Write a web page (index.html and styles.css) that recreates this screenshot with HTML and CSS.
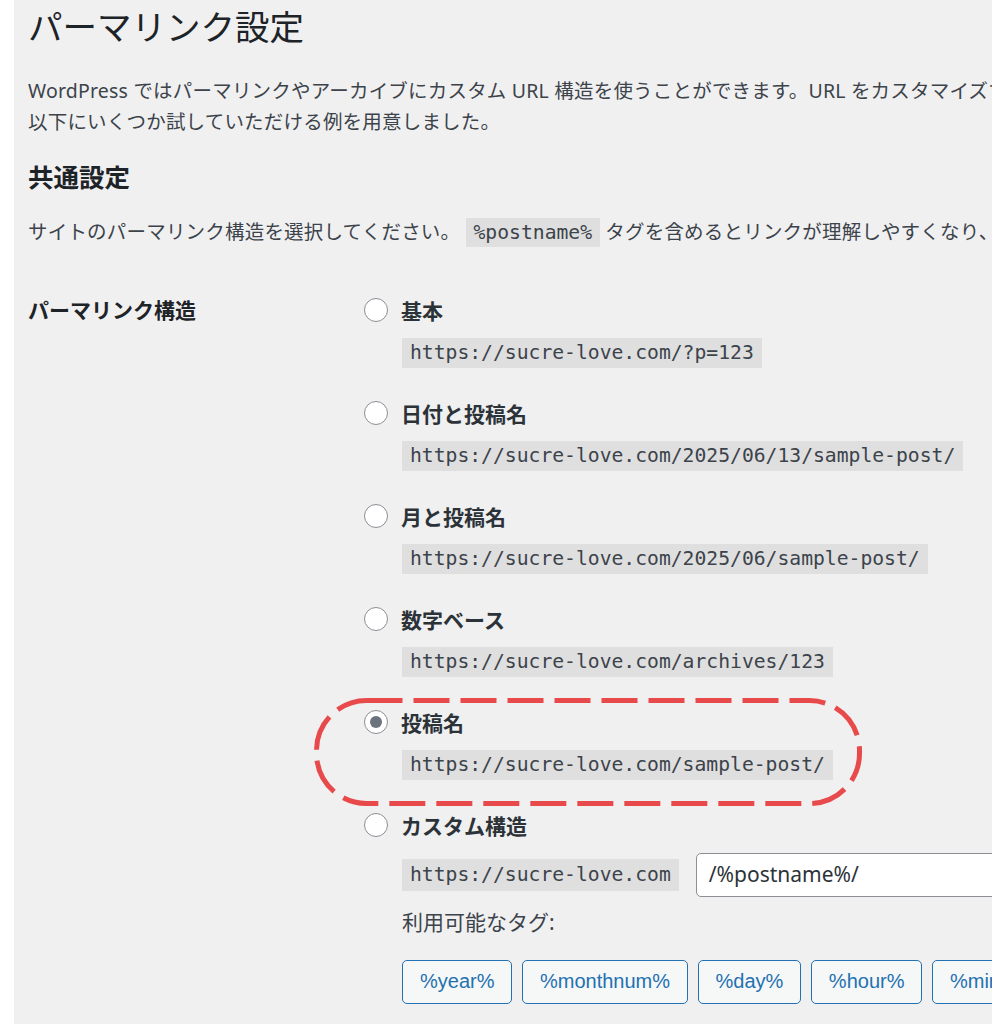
FILE: index.html
```html
<!DOCTYPE html>
<html lang="ja">
<head>
  <meta charset="UTF-8" />
  <title>パーマリンク設定</title>
  <link rel="stylesheet" href="styles.css">
</head>
<body>
  <div class="panel">
    <h1 class="title">パーマリンク設定</h1>

    <p class="intro">
      <span class="line">WordPress ではパーマリンクやアーカイブにカスタム URL 構造を使うことができます。URL をカスタマイズすることで、リンクの美しさや使いやすさ、そして前方互換性を改善できます。</span>
      <span class="line">以下にいくつか試していただける例を用意しました。</span>
    </p>

    <h2 class="section">共通設定</h2>

    <p class="desc">サイトのパーマリンク構造を選択してください。 <code>%postname%</code> タグを含めるとリンクが理解しやすくなり、投稿が検索エンジンで上位に表示されやすくなります。</p>

    <div class="form-row">
      <div class="th">パーマリンク構造</div>
      <div class="td">
        <div class="opt">
          <label class="opt-label"><span class="radio"></span>基本</label>
          <code class="sample">https://sucre-love.com/?p=123</code>
        </div>
        <div class="opt">
          <label class="opt-label"><span class="radio"></span>日付と投稿名</label>
          <code class="sample">https://sucre-love.com/2025/06/13/sample-post/</code>
        </div>
        <div class="opt">
          <label class="opt-label"><span class="radio"></span>月と投稿名</label>
          <code class="sample">https://sucre-love.com/2025/06/sample-post/</code>
        </div>
        <div class="opt">
          <label class="opt-label"><span class="radio"></span>数字ベース</label>
          <code class="sample">https://sucre-love.com/archives/123</code>
        </div>
        <div class="opt">
          <label class="opt-label"><span class="radio checked"></span>投稿名</label>
          <code class="sample">https://sucre-love.com/sample-post/</code>
        </div>
        <div class="opt custom">
          <label class="opt-label"><span class="radio"></span>カスタム構造</label>
          <div class="custom-row">
            <code class="sample">https://sucre-love.com</code>
            <div class="custom-input">/%postname%/</div>
          </div>
          <div class="tags-label">利用可能なタグ:</div>
          <div class="tags">
            <button class="tag">%year%</button>
            <button class="tag">%monthnum%</button>
            <button class="tag">%day%</button>
            <button class="tag">%hour%</button>
            <button class="tag">%minute%</button>
            <button class="tag">%second%</button>
          </div>
        </div>
      </div>
    </div>

    <svg class="highlight" width="548" height="108" viewBox="0 0 548 108">
      <rect x="2.5" y="2.5" width="543" height="103" rx="50" ry="50"
            fill="none" stroke="#e8494a" stroke-width="5" stroke-dasharray="36 11" />
    </svg>
  </div>
</body>
</html>
```

FILE: styles.css
```css
body {
  margin: 0;
  background: #fff;
  font-family: "Noto Sans", "Noto Sans CJK JP", sans-serif;
  color: #3c434a;
}

.panel {
  position: relative;
  margin-left: 14px;
  width: 978px;
  height: 1024px;
  padding-left: 14px;
  box-sizing: border-box;
  background: #f0f0f1;
  overflow: hidden;
}

.title {
  margin: 0;
  padding-top: 5px;
  font-size: 34.5px;
  line-height: 44px;
  font-weight: 400;
  color: #1d2327;
  white-space: nowrap;
}

.intro {
  margin: 26px 0 0;
  font-size: 19.5px;
  line-height: 31px;
  letter-spacing: 0.2px;
}

.intro .line {
  display: block;
  white-space: nowrap;
}

.section {
  margin: 22.5px 0 0;
  font-size: 25.5px;
  line-height: 34px;
  font-weight: 700;
  color: #1d2327;
}

.desc {
  margin: 22.5px 0 0;
  font-size: 19.5px;
  line-height: 31px;
  letter-spacing: 0.2px;
  white-space: nowrap;
}

code {
  font-family: "DejaVu Sans Mono", monospace;
  font-size: 19.7px;
  letter-spacing: 0;
  background: #dfdfe0;
  color: #3c434a;
  padding: 3px 8px;
}

.form-row {
  display: grid;
  grid-template-columns: 336px 1fr;
  margin-top: 46.5px;
}

.th {
  font-size: 21px;
  line-height: 30px;
  font-weight: 700;
  color: #1d2327;
}

.opt {
  display: flex;
  flex-direction: column;
  align-items: flex-start;
  margin-bottom: 30px;
}

.opt-label {
  display: flex;
  align-items: center;
  gap: 13px;
  height: 30px;
  font-size: 21px;
  font-weight: 700;
  color: #2c3338;
}

.radio {
  width: 24px;
  height: 24px;
  box-sizing: border-box;
  border: 1.5px solid #8c8f94;
  border-radius: 50%;
  background: #fff;
  display: flex;
  align-items: center;
  justify-content: center;
}

.radio.checked::before {
  content: "";
  width: 12px;
  height: 12px;
  border-radius: 50%;
  background: #6b737c;
}

.sample {
  display: block;
  margin: 13px 0 0 38px;
  line-height: 24px;
  white-space: nowrap;
}

.custom-row {
  display: flex;
  align-items: center;
  gap: 17px;
  margin: 13px 0 0 38px;
  height: 44px;
}

.custom-row .sample {
  margin: 0;
  padding: 4px 8px;
}

.custom-input {
  width: 400px;
  height: 44px;
  box-sizing: border-box;
  border: 1.5px solid #8c8f94;
  border-radius: 5px;
  background: #fff;
  padding-left: 12px;
  font-size: 21px;
  line-height: 41px;
  color: #2c3338;
}

.tags-label {
  margin: 10px 0 0 38px;
  font-size: 21px;
  line-height: 30px;
  color: #3c434a;
}

.tags {
  display: flex;
  gap: 9.5px;
  margin: 23px 0 0 38px;
  white-space: nowrap;
}

.tag {
  height: 44px;
  padding: 0 17px;
  font-family: "Liberation Sans", Arial, sans-serif;
  font-size: 20px;
  color: #2271b1;
  background: #f6f7f7;
  border: 1.5px solid #2271b1;
  border-radius: 5px;
  flex-shrink: 0;
}

.highlight {
  position: absolute;
  left: 300px;
  top: 698px;
}
```
